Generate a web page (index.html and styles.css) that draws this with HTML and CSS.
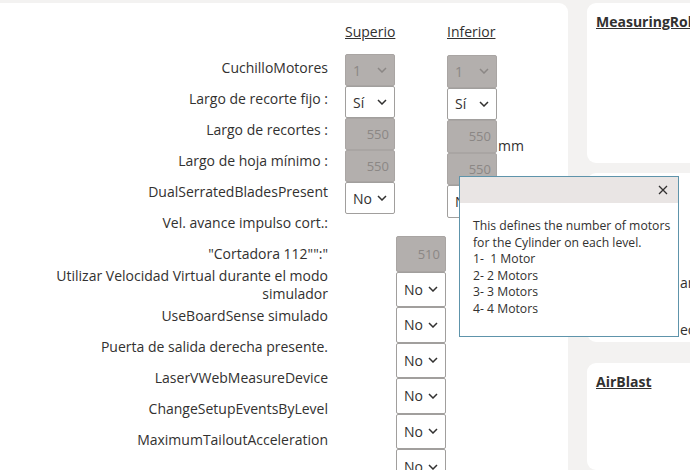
FILE: index.html
```html
<!DOCTYPE html>
<html lang="es">

<head>
    <meta charset="UTF-8">
    <meta name="viewport" content="width=device-width, initial-scale=1.0">
    <title>Cuchillo</title>
    <link rel="stylesheet" href="styles.css">
</head>

<body>
    <div class="page">
        <div class="main">
            <div class="form">
                <div class="labels">
                    <div class="lbl">CuchilloMotores</div>
                    <div class="lbl">Largo de recorte fijo :</div>
                    <div class="lbl">Largo de recortes :</div>
                    <div class="lbl">Largo de hoja mínimo :</div>
                    <div class="lbl">DualSerratedBladesPresent</div>
                    <div class="lbl">Vel. avance impulso cort.:</div>
                    <div class="lbl">"Cortadora 112"":"</div>
                    <div class="lbl">Utilizar Velocidad Virtual durante el modo simulador</div>
                    <div class="lbl">UseBoardSense simulado</div>
                    <div class="lbl">Puerta de salida derecha presente.</div>
                    <div class="lbl">LaserVWebMeasureDevice</div>
                    <div class="lbl">ChangeSetupEventsByLevel</div>
                    <div class="lbl">MaximumTailoutAcceleration</div>
                </div>
                <div class="fields">
                    <div class="levels">
                        <div class="level">
                            <div class="level-head">Superio</div>
                            <div class="sel off"><span>1</span><svg class="chev" viewBox="0 0 10 6"><path d="M1 1 L5 5 L9 1" /></svg></div>
                            <div class="sel"><span>Sí</span><svg class="chev" viewBox="0 0 10 6"><path d="M1 1 L5 5 L9 1" /></svg></div>
                            <div class="num">550</div>
                            <div class="num">550</div>
                            <div class="sel"><span>No</span><svg class="chev" viewBox="0 0 10 6"><path d="M1 1 L5 5 L9 1" /></svg></div>
                        </div>
                        <div class="level level-b">
                            <div class="level-head">Inferior</div>
                            <div class="sel off"><span>1</span><svg class="chev" viewBox="0 0 10 6"><path d="M1 1 L5 5 L9 1" /></svg></div>
                            <div class="sel"><span>Sí</span><svg class="chev" viewBox="0 0 10 6"><path d="M1 1 L5 5 L9 1" /></svg></div>
                            <div class="unit-row">
                                <div class="num">550</div>
                                <span class="unit">mm</span>
                            </div>
                            <div class="num">550</div>
                            <div class="sel"><span>No</span><svg class="chev" viewBox="0 0 10 6"><path d="M1 1 L5 5 L9 1" /></svg></div>
                        </div>
                    </div>
                    <div class="extra">
                        <div class="num">510</div>
                        <div class="sel"><span>No</span><svg class="chev" viewBox="0 0 10 6"><path d="M1 1 L5 5 L9 1" /></svg></div>
                        <div class="sel"><span>No</span><svg class="chev" viewBox="0 0 10 6"><path d="M1 1 L5 5 L9 1" /></svg></div>
                        <div class="sel"><span>No</span><svg class="chev" viewBox="0 0 10 6"><path d="M1 1 L5 5 L9 1" /></svg></div>
                        <div class="sel"><span>No</span><svg class="chev" viewBox="0 0 10 6"><path d="M1 1 L5 5 L9 1" /></svg></div>
                        <div class="sel"><span>No</span><svg class="chev" viewBox="0 0 10 6"><path d="M1 1 L5 5 L9 1" /></svg></div>
                        <div class="sel"><span>No</span><svg class="chev" viewBox="0 0 10 6"><path d="M1 1 L5 5 L9 1" /></svg></div>
                    </div>
                </div>
            </div>

            <!-- help popup for CuchilloMotores -->
            <div class="tip">
                <div class="tip-head">
                    <svg class="tip-close" viewBox="0 0 10 10"><path d="M1 1 L9 9 M9 1 L1 9" /></svg>
                </div>
                <div class="tip-body">
                    This defines the number of motors<br>
                    for the Cylinder on each level.<br>
                    1-&nbsp; 1 Motor<br>
                    2- 2 Motors<br>
                    3- 3 Motors<br>
                    4- 4 Motors
                </div>
            </div>
        </div>

        <div class="side">
            <div class="card card-a">
                <div class="card-title">MeasuringRoll</div>
            </div>
            <div class="card card-b">
                <div class="card-row row-1">ancho</div>
                <div class="card-row row-2">ecuación</div>
            </div>
            <div class="card card-c">
                <div class="card-title">AirBlast</div>
            </div>
        </div>
    </div>
</body>

</html>
```

FILE: styles.css
```css
html,
body {
    margin: 0;
    font-family: "Open Sans", "Noto Sans", sans-serif;
    font-size: 14px;
    color: #323130;
    background: #f3f2f1;
    overflow: hidden;
}

.page {
    display: flex;
    height: 100vh;
    padding-top: 3px;
    box-sizing: border-box;
}

.main {
    position: relative;
    z-index: 1;
    flex: 0 0 568px;
    background: #fff;
    border-top-right-radius: 9px;
}

.form {
    display: flex;
}

.labels {
    width: 328px;
    padding: 49.5px 0 0 56px;
    box-sizing: border-box;
}

.lbl {
    height: 31px;
    display: flex;
    align-items: center;
    justify-content: flex-end;
    text-align: right;
    line-height: 18px;
}

.fields {
    margin-left: 17px;
    padding-top: 17px;
}

.levels {
    display: flex;
    gap: 52px;
}

.level {
    display: flex;
    flex-direction: column;
    width: 50px;
}

.level-head {
    line-height: 24px;
    margin-bottom: 10px;
    text-decoration: underline;
    white-space: nowrap;
}

.level-b .level-head {
    margin-bottom: 11px;
}

.level-b > .sel,
.level-b > .num,
.level-b .num {
    height: 32.5px;
}

.unit-row {
    display: flex;
    align-items: flex-end;
}

.unit-row .num {
    flex: 0 0 50px;
}

.unit {
    margin-left: 1px;
    line-height: 18px;
    margin-bottom: -2px;
}

.sel,
.num {
    height: 32px;
    box-sizing: border-box;
    border: 1px solid #a19f9d;
    border-radius: 2px;
    background: #fff;
    display: flex;
    align-items: center;
}

.sel {
    justify-content: space-between;
    padding: 0 7px;
}

.chev {
    width: 10px;
    height: 6px;
    fill: none;
    stroke: #323130;
    stroke-width: 1.5;
}

.off,
.num {
    background: #b3afad;
    border-color: #a9a5a3;
    color: #8b8785;
}

.off .chev {
    stroke: #8b8785;
}

.num {
    justify-content: flex-end;
    padding-right: 5px;
    font-size: 13px;
}

.extra {
    margin: 18.5px 0 0 51px;
    width: 50px;
    display: flex;
    flex-direction: column;
}

.extra .sel,
.extra .num {
    height: 35.5px;
}

.tip {
    position: absolute;
    z-index: 5;
    left: 459px;
    top: 173px;
    width: 220px;
    height: 161px;
    box-sizing: border-box;
    border: 1px solid #5e94ab;
    background: #fff;
}

.tip-head {
    height: 26px;
    background: #e9e5e4;
    display: flex;
    align-items: center;
    justify-content: flex-end;
    padding-right: 10px;
}

.tip-close {
    width: 10px;
    height: 10px;
    fill: none;
    stroke: #323130;
    stroke-width: 1.3;
}

.tip-body {
    padding: 15px 8px 15px 13px;
    font-size: 12.2px;
    line-height: 16.5px;
    white-space: nowrap;
}

.side {
    flex: 0 0 200px;
    margin-left: 19px;
    display: flex;
    flex-direction: column;
}

.card {
    background: #fff;
    border-radius: 9px;
}

.card-a {
    height: 160px;
}

.card-b {
    margin-top: 10px;
    height: 169px;
}

.card-c {
    margin-top: 21px;
    flex: 1;
}

.card-title {
    padding: 9px 0 0 9px;
    line-height: 20px;
    font-weight: bold;
    text-decoration: underline;
}

.card-row {
    padding-left: 93px;
    line-height: 20px;
}

.row-1 {
    padding-top: 100px;
}

.row-2 {
    padding-top: 27px;
}
```
